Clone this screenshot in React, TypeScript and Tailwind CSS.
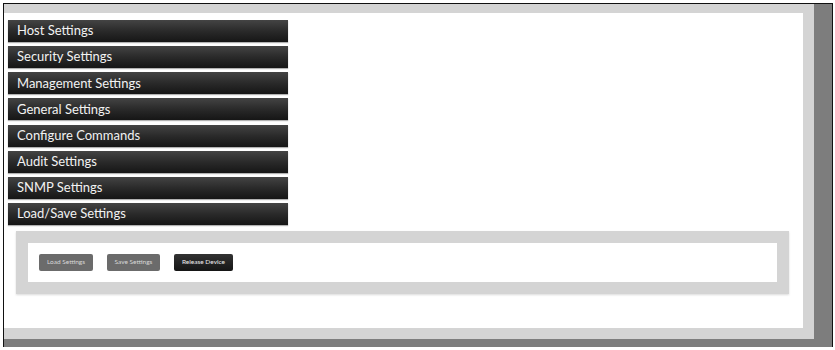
import React from "react";

const items = [
  "Host Settings",
  "Security Settings",
  "Management Settings",
  "General Settings",
  "Configure Commands",
  "Audit Settings",
  "SNMP Settings",
  "Load/Save Settings",
];

const font = "font-['Lato','Open_Sans',sans-serif]";

export default function App() {
  return (
    <div className={`w-[835px] h-[350px] bg-white pt-[3px] pl-[3px] ${font}`}>
      <div className="w-[830px] h-[344px] border-l border-t border-r border-[#111] bg-[#7d7d7d] flex flex-col">
        <div className="w-[810px] h-[335px] bg-[#d4d4d4] pt-[9px] pr-[11px] pb-[11px]">
          <div className="w-full h-full bg-white pl-[4px] pt-[7px]">
            <div className="flex flex-col gap-[4.15px]">
              {items.map((t) => (
                <div
                  key={t}
                  className="w-[280px] h-[22px] flex items-center pl-[9px] text-[13px] text-[#f2f2f2] bg-gradient-to-b from-[#444] via-[#2a2a2a] to-[#161616] shadow-[0_1px_1px_rgba(0,0,0,0.3)]"
                >
                  {t}
                </div>
              ))}
            </div>
            <div className="ml-[8px] mt-[6px] w-[773px] bg-[#d4d4d4] p-[12px] shadow-[0_1px_2px_rgba(0,0,0,0.15)]">
              <div className="bg-white h-[39px] pl-[11px] flex items-center gap-[14px]">
                <button className={`w-[54px] h-[17px] rounded-[2px] bg-[#6b6b6b] text-[#d8d8d8] text-[6.5px] leading-none ${font}`}>
                  Load Settings
                </button>
                <button className={`w-[53px] h-[17px] rounded-[2px] bg-[#6b6b6b] text-[#d8d8d8] text-[6.5px] leading-none ${font}`}>
                  Save Settings
                </button>
                <button className={`w-[59px] h-[17px] rounded-[2px] bg-gradient-to-b from-[#333] to-[#151515] text-[#eee] text-[6.5px] leading-none ${font}`}>
                  Release Device
                </button>
              </div>
            </div>
          </div>
        </div>
      </div>
    </div>
  );
}
